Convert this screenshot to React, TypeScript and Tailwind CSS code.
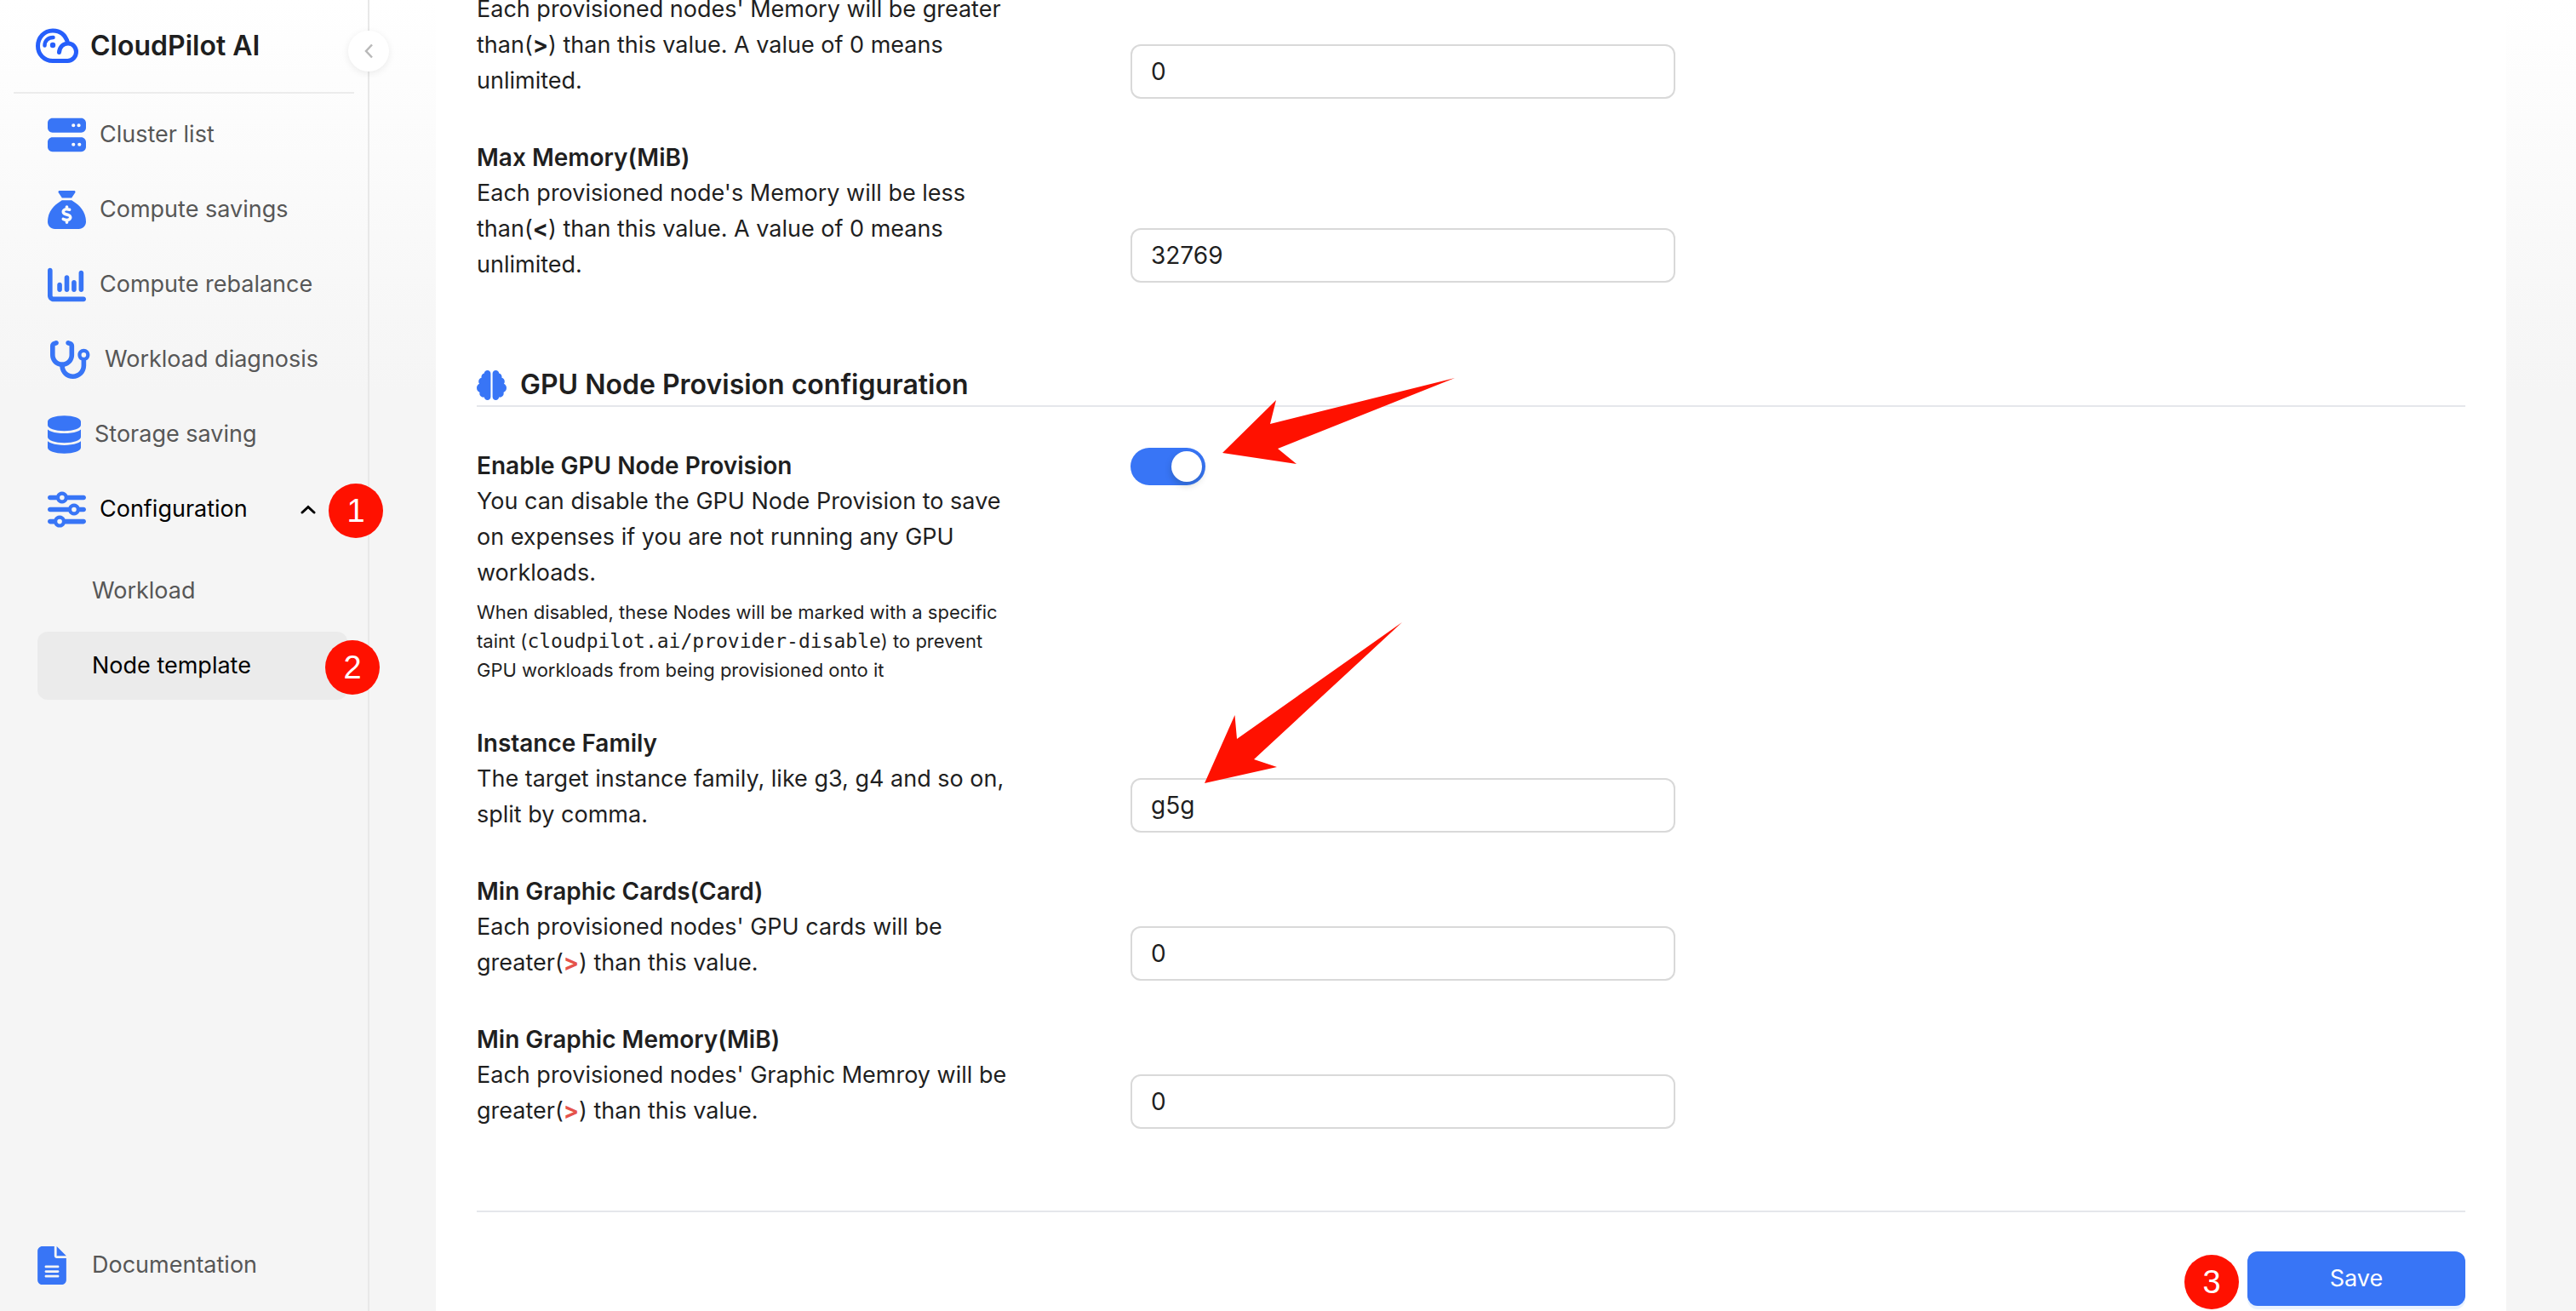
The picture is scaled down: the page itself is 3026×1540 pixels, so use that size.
import { useState, type ReactNode } from "react";
import {
  FaBrain,
  FaChartColumn,
  FaDatabase,
  FaFileLines,
  FaSackDollar,
  FaServer,
  FaSliders,
  FaStethoscope,
} from "react-icons/fa6";
import type { IconType } from "react-icons";

function Logo() {
  return (
    <svg viewBox="0 0 50 42" className="h-[42px] w-[50px] shrink-0" fill="none" stroke="#265ffb" strokeWidth="5" strokeLinecap="round" aria-hidden="true">
      <path d="M27.500 28.500C28 22 32.500 18 38 18c5.500 0 9.500 4.500 9.500 10s-4.500 10.500-10 10.500H20C10 38.500 2.500 31 2.500 21S10 3 20 3c8 0 14.500 4 17.500 14" />
      <path d="M10.500 20.500c0-5.500 4-9.500 10-9.500" strokeWidth="4.500" />
      <circle cx="20" cy="20" r="3.200" fill="#265ffb" stroke="none" />
    </svg>
  );
}

function Badge({ n, className }: { n: number; className: string }) {
  return (
    <span
      className={`absolute z-10 flex size-16 items-center justify-center rounded-full bg-[#ff1100] font-['Liberation_Sans',sans-serif] text-[38px] leading-none font-medium text-white ${className}`}
    >
      {n}
    </span>
  );
}

function NavItem({ icon: Icon, label, iconWidth = "w-[45px]" }: { icon: IconType; label: string; iconWidth?: string }) {
  return (
    <a href="#" className="flex h-20 items-center gap-4 pl-10 text-[#575757]">
      <Icon className={`h-[45px] shrink-0 text-[#3875f6] ${iconWidth}`} />
      <span>{label}</span>
    </a>
  );
}

function Sidebar() {
  return (
    <aside className="relative flex w-[434px] shrink-0 flex-col border-r-2 border-[#e8e8e8] px-4">
      <button
        type="button"
        aria-label="Collapse sidebar"
        className="absolute top-9 -right-[25px] z-10 flex size-12 items-center justify-center rounded-full bg-white shadow-[0_2px_8px_rgba(0,0,0,0.08)]"
      >
        <svg viewBox="0 0 10 18" className="h-[18px] w-2.5" fill="none" stroke="#b9b9b9" strokeWidth="2.500" aria-hidden="true">
          <path d="M9 1.500 2 9l7 7.500" />
        </svg>
      </button>

      <div className="flex h-[110px] items-center gap-3.5 border-b-2 border-[#ececec] pl-[26px]">
        <Logo />
        <span className="text-[32px] font-semibold text-[#1f1f1f]">CloudPilot AI</span>
      </div>

      <nav className="mt-2 flex flex-col gap-2">
        <NavItem icon={FaServer} label="Cluster list" />
        <NavItem icon={FaSackDollar} label="Compute savings" />
        <NavItem icon={FaChartColumn} label="Compute rebalance" />
        <NavItem icon={FaStethoscope} label="Workload diagnosis" iconWidth="w-[51px]" />
        <NavItem icon={FaDatabase} label="Storage saving" iconWidth="w-[39px]" />
        <button type="button" aria-expanded="true" className="relative flex h-20 items-center gap-4 pr-[45px] pl-10 text-left text-black">
          <FaSliders className="size-[45px] shrink-0 text-[#3875f6]" />
          <span className="flex-1">Configuration</span>
          <svg viewBox="0 0 18 11" className="h-[11px] w-[18px]" fill="none" stroke="currentColor" strokeWidth="3" strokeLinecap="round" aria-hidden="true">
            <path d="m2 9 7-6.500L16 9" />
          </svg>
          <Badge n={1} className="top-2.5 -right-[34px]" />
        </button>
        <div className="mt-2 mr-2 ml-7 flex flex-col gap-2">
          <a href="#" className="flex h-20 items-center pl-16 text-[#575757]">
            Workload
          </a>
          <a href="#" aria-current="page" className="relative flex h-20 items-center rounded-xl bg-[#ebebeb] pl-16 text-black">
            Node template
            <Badge n={2} className="top-2.5 -right-[38px]" />
          </a>
        </div>
      </nav>

      <a href="#" className="mt-auto mb-3.5 flex h-20 items-center gap-[30px] pl-7 text-[#575757]">
        <FaFileLines className="h-[45px] w-[34px] shrink-0 text-[#3875f6]" />
        <span>Documentation</span>
      </a>
    </aside>
  );
}

interface FieldProps {
  id: string;
  title?: string;
  description: ReactNode;
  value: string;
  children?: ReactNode;
}

function Field({ id, title, description, value, children }: FieldProps) {
  const [text, setText] = useState(value);
  return (
    <div className="flex items-end">
      <div className="w-[768px] shrink-0 pr-32">
        {title && (
          <label htmlFor={id} className="block text-[28px] font-semibold">
            {title}
          </label>
        )}
        <p>{description}</p>
      </div>
      <div className="relative w-[640px]">
        <input
          id={id}
          aria-label={title ?? "Min Memory(MiB)"}
          value={text}
          onChange={(e) => setText(e.target.value)}
          className="block h-16 w-full rounded-xl border-2 border-[#d9d9d9] bg-white px-[22px] text-[28px] outline-none"
        />
        {children}
      </div>
    </div>
  );
}

function Sign({ children, red }: { children: ReactNode; red?: boolean }) {
  return <span className={red ? "font-bold text-[#e5534b]" : "font-bold"}>{children}</span>;
}

export default function App() {
  const [gpu, setGpu] = useState(true);
  return (
    <div className="flex h-screen overflow-hidden bg-[linear-gradient(to_bottom,#ffffff_0px,#f5f5f5_460px)] font-['Inter',sans-serif] text-[27px] leading-[42px] text-[#1f1f1f]">
      <Sidebar />

      <main className="mr-[82px] ml-[78px] flex min-w-0 flex-1 flex-col justify-end overflow-hidden bg-white px-12 pb-1.5">
        <div className="flex shrink-0 flex-col gap-12">
          <Field
            id="min-memory"
            description={
              <>
                Each provisioned nodes' Memory will be greater than(<Sign>&gt;</Sign>) than this value. A value of 0 means unlimited.
              </>
            }
            value="0"
          />
          <Field
            id="max-memory"
            title="Max Memory(MiB)"
            description={
              <>
                Each provisioned node's Memory will be less than(<Sign>&lt;</Sign>) than this value. A value of 0 means unlimited.
              </>
            }
            value="32769"
          />
        </div>

        <section className="mt-24 flex shrink-0 flex-col gap-12">
          <h2 className="flex items-center gap-4 border-b-2 border-gray-200 text-[32px] leading-[48px] font-semibold">
            <FaBrain className="size-[35px] text-[#3875f6]" />
            GPU Node Provision configuration
          </h2>

          <div className="flex items-start">
            <div className="w-[768px] shrink-0 pr-32">
              <h3 id="gpu-label" className="text-[28px] font-semibold">
                Enable GPU Node Provision
              </h3>
              <p>You can disable the GPU Node Provision to save on expenses if you are not running any GPU workloads.</p>
              <p className="mt-2 text-[22px] leading-[34px]">
                When disabled, these Nodes will be marked with a specific taint (
                <code className="font-['DejaVu_Sans_Mono',monospace] text-[23px] leading-none">cloudpilot.ai/provider-disable</code>) to
                prevent GPU workloads from being provisioned onto it
              </p>
            </div>
            <div className="relative">
              <button
                type="button"
                role="switch"
                aria-checked={gpu}
                aria-labelledby="gpu-label"
                onClick={() => setGpu(!gpu)}
                className={`flex h-11 w-[88px] items-center rounded-full p-1 ${gpu ? "justify-end bg-[#3875f6]" : "justify-start bg-gray-300"}`}
              >
                <span className="size-9 rounded-full bg-white shadow-[0_4px_8px_rgba(0,35,11,0.2)]" />
              </button>
              <svg viewBox="0 0 273 101" className="absolute -top-[82px] left-[108px] h-[101px] w-[273px]" fill="#ff1100" aria-hidden="true">
                <path d="M0 88 63 26 56 54 273 0 65 83 87 101Z" />
              </svg>
            </div>
          </div>

          <Field id="family" title="Instance Family" description="The target instance family, like g3, g4 and so on, split by comma." value="g5g">
            <svg viewBox="0 0 232 189" className="absolute -top-[183px] left-[87px] h-[189px] w-[232px]" fill="#ff1100" aria-hidden="true">
              <path d="M0 189 35.500 109 38 137 232 0 58 161 85 170Z" />
            </svg>
          </Field>
          <Field
            id="min-cards"
            title="Min Graphic Cards(Card)"
            description={
              <>
                Each provisioned nodes' GPU cards will be greater(<Sign red>&gt;</Sign>) than this value.
              </>
            }
            value="0"
          />
          <Field
            id="min-graphic-memory"
            title="Min Graphic Memory(MiB)"
            description={
              <>
                Each provisioned nodes' Graphic Memroy will be greater(<Sign red>&gt;</Sign>) than this value.
              </>
            }
            value="0"
          />
        </section>

        <footer className="mt-24 flex shrink-0 justify-end border-t-2 border-gray-200 pt-[46px]">
          <div className="relative">
            <Badge n={3} className="top-1 right-[266px]" />
            <button type="button" className="block h-16 w-64 rounded-xl bg-[#3875f6] text-white shadow-[0_4px_0_#e8f2ff]">
              Save
            </button>
          </div>
        </footer>
      </main>
    </div>
  );
}
